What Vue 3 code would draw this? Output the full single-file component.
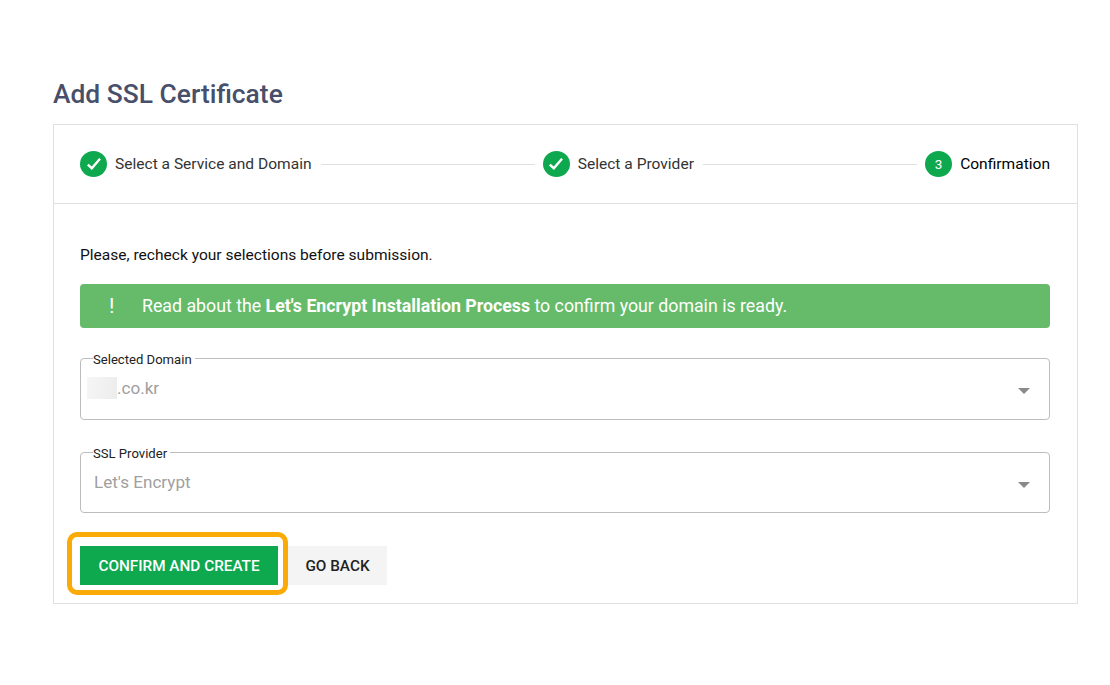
<template>
  <div class="page">
    <h1 class="title">Add SSL Certificate</h1>

    <div class="card">
      <!-- 步骤条 -->
      <div class="stepper">
        <template v-for="(step, index) in steps" :key="step.label">
          <div class="step">
            <span class="step-icon">
              <svg v-if="step.done" width="18" height="18" viewBox="0 0 18 18">
                <path d="M2.8 9.6 L6.8 13.2 L15 3.8" fill="none" stroke="#fff" stroke-width="2.4" />
              </svg>
              <template v-else>{{ index + 1 }}</template>
            </span>
            <span class="step-label" :class="{ current: !step.done }">{{ step.label }}</span>
          </div>
          <div v-if="index < steps.length - 1" class="step-line"></div>
        </template>
      </div>

      <div class="body">
        <p class="hint">Please, recheck your selections before submission.</p>

        <div class="alert">
          <span class="alert-mark">!</span>
          <span>Read about the <b>Let's Encrypt Installation Process</b> to confirm your domain is ready.</span>
        </div>

        <fieldset class="select first">
          <legend>Selected Domain</legend>
          <div class="value"><span class="blur"></span>.co.kr</div>
          <span class="arrow"></span>
        </fieldset>

        <fieldset class="select second">
          <legend>SSL Provider</legend>
          <div class="value">Let's Encrypt</div>
          <span class="arrow"></span>
        </fieldset>

        <div class="actions">
          <button class="btn primary">CONFIRM AND CREATE</button>
          <button class="btn secondary">GO BACK</button>
          <!-- 橙色高亮框 -->
          <div class="highlight"></div>
        </div>
      </div>
    </div>
  </div>
</template>

<script setup>
const steps = [
  { label: 'Select a Service and Domain', done: true },
  { label: 'Select a Provider', done: true },
  { label: 'Confirmation', done: false },
]
</script>

<style>
html, body {
  margin: 0;
  background: #fff;
}
</style>

<style scoped>
.page {
  box-sizing: border-box;
  width: 1110px;
  height: 685px;
  padding: 78px 32px 0 53px;
  font-family: Roboto, "Liberation Sans", sans-serif;
}

.title {
  margin: 0 0 13px;
  font-size: 26.4px;
  line-height: 33px;
  font-weight: 500;
  color: #474f6b;
}

.card {
  border: 1px solid #e0e0e0;
  height: 480px;
  box-sizing: border-box;
}

.stepper {
  display: flex;
  align-items: center;
  height: 78px;
  padding: 0 27px 0 26px;
  border-bottom: 1px solid #e0e0e0;
}

.step {
  display: flex;
  align-items: center;
  gap: 8px;
  flex-shrink: 0;
}

.step-icon {
  display: flex;
  align-items: center;
  justify-content: center;
  width: 27px;
  height: 26px;
  border-radius: 50%;
  background: #0ea84f;
  color: #fff;
  font-size: 13.5px;
}

.step-label {
  font-size: 15.55px;
  color: #333;
}

.step-label.current {
  color: #000;
}

.step-line {
  flex: 1;
  height: 1px;
  margin: 0 8px 0 9px;
  background: #e0e0e0;
}

.body {
  padding: 42px 27px 0 26px;
}

.hint {
  margin: 0 0 20px;
  font-size: 15.55px;
  line-height: 18px;
  color: #111;
}

.alert {
  display: flex;
  align-items: center;
  height: 44px;
  padding-left: 29px;
  border-radius: 4px;
  background: #66bb6a;
  color: #fff;
  font-size: 17.75px;
}

.alert-mark {
  width: 33px;
  font-size: 21px;
}

.alert b {
  font-weight: 700;
}

.select {
  position: relative;
  box-sizing: border-box;
  margin: 0;
  padding: 0 13px;
  border: 1px solid #bdbdbd;
  border-radius: 4px;
  min-width: 0;
}

.select.first {
  margin-top: 24px;
  height: 68px;
}

.select.second {
  margin-top: 26px;
  height: 67px;
}

.select legend {
  padding: 0 3px 0 0;
  margin-left: -1px;
  font-size: 13.1px;
  line-height: 16px;
  height: 12px;
  color: #222;
}

.value {
  display: flex;
  align-items: center;
  height: 26px;
  margin-top: 11px;
  font-size: 17.1px;
  color: #a0a0a0;
}

.blur {
  width: 30px;
  height: 22px;
  margin-left: -7px;
  background: linear-gradient(100deg, #f6f6f6, #ececec);
}

.arrow {
  position: absolute;
  right: 19px;
  top: 24px;
  width: 0;
  height: 0;
  border-left: 6px solid transparent;
  border-right: 6px solid transparent;
  border-top: 6px solid #8a8a8a;
}

.actions {
  position: relative;
  display: flex;
  margin-top: 33px;
}

.btn {
  height: 39px;
  border: none;
  padding: 0;
  font-family: inherit;
  font-size: 15.3px;
  font-weight: 500;
}

.primary {
  width: 198px;
  background: #0ea84f;
  color: #fff;
}

.secondary {
  width: 99px;
  margin-left: 10px;
  background: #f4f4f4;
  color: #222;
}

.highlight {
  position: absolute;
  left: -13px;
  top: -14px;
  width: 221px;
  height: 63px;
  box-sizing: border-box;
  border: 5px solid #fbab08;
  border-radius: 10px;
}
</style>
